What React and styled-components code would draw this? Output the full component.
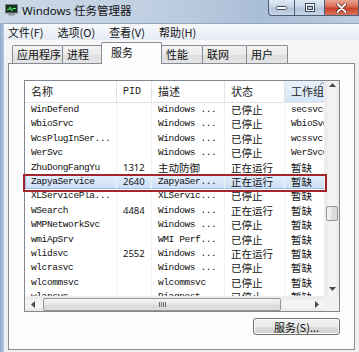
import React from "react";
import styled, { createGlobalStyle } from "styled-components";

const cjkFont = `"Noto Sans CJK SC", "Noto Sans", sans-serif`;
const monoFont = `"Liberation Mono", "Noto Sans CJK SC", monospace`;
const uiFont = `"Noto Sans", "Noto Sans CJK SC", sans-serif`;

const GlobalStyle = createGlobalStyle`
  *, *::before, *::after { box-sizing: border-box; }
  html, body { margin: 0; padding: 0; overflow: hidden; background: #b9cadd; }
  body { font-family: ${cjkFont}; color: #000; }
`;

const Window = styled.div`
  width: 359px;
  height: 352px;
  display: flex;
  flex-direction: column;
  position: relative;
  background: linear-gradient(90deg, #8ea9cc 0, #b4c7de 4px, #c3d2e2 100%);
`;

const TitleBar = styled.div`
  height: 23px;
  flex: none;
  display: flex;
  align-items: flex-start;
  background: linear-gradient(
    90deg,
    #cad8e6 0%,
    #c3d2e3 35%,
    #b4c6dc 60%,
    #a9bdd6 72%,
    #bccbdd 100%
  );
`;

const AppIcon = styled.svg`
  flex: none;
  margin: 4px 0 0 5px;
`;

const TitleText = styled.div`
  margin: 3px 0 0 4px;
  font: 11.5px/16px ${uiFont};
  color: #151515;
`;

const Controls = styled.div`
  margin-left: auto;
  display: flex;
  height: 16px;
`;

const CaptionButton = styled.div`
  width: ${(p) => p.$w}px;
  height: 16px;
  display: flex;
  align-items: center;
  justify-content: center;
  border: 1px solid #4c5f7a;
  border-top: none;
  background: ${(p) =>
    p.$close
      ? "linear-gradient(#eaa597, #d96b52 45%, #c6412a 55%, #d9755c)"
      : "linear-gradient(#dfe8f3, #c8d6e7 45%, #b3c4da 55%, #c8d6e6)"};
  &:first-child {
    border-bottom-left-radius: 4px;
  }
  & + & {
    border-left: none;
  }
`;

const Client = styled.div`
  flex: 1;
  margin-left: 4px;
  display: flex;
  flex-direction: column;
  background: #f0f0f0;
  min-height: 0;
`;

const MenuBar = styled.div`
  height: 17px;
  flex: none;
  display: flex;
  align-items: center;
  padding-left: 4px;
  border-top: 1px solid #93a6bf;
  background: linear-gradient(#f7f9fc, #e5ecf5);
`;

const MenuItem = styled.div`
  padding-right: 14px;
  font: 11px/16px ${cjkFont};
  color: #111;
`;

const TabArea = styled.div`
  flex: 1;
  display: flex;
  flex-direction: column;
  padding: 2px 4px 2px 4px;
  min-height: 0;
  background: linear-gradient(#f6f7f8, #f0f0f0 30px);
`;

const TabStrip = styled.div`
  height: 21px;
  flex: none;
  display: flex;
  align-items: flex-end;
  padding-left: 4px;
  position: relative;
  z-index: 1;
`;

const Tab = styled.div`
  width: ${(p) => p.$w}px;
  height: ${(p) => (p.$active ? 22 : 18)}px;
  margin-bottom: ${(p) => (p.$active ? -1 : 0)}px;
  padding-left: ${(p) => (p.$active ? 9 : 4)}px;
  border: 1px solid #898c95;
  border-bottom: none;
  border-radius: 2px 2px 0 0;
  background: ${(p) =>
    p.$active
      ? "#fcfcfc"
      : "linear-gradient(#f3f3f3, #ebebeb 50%, #dedede 51%, #e4e4e4)"};
  font: 11px/${(p) => (p.$active ? 19 : 17)}px ${cjkFont};
  color: #111;
  white-space: nowrap;
  & + & {
    margin-left: -1px;
  }
`;

const Panel = styled.div`
  flex: 1;
  display: flex;
  flex-direction: column;
  border: 1px solid #898c95;
  background: #fcfcfc;
  padding: 16px 14px 14px 15px;
  min-height: 0;
`;

const List = styled.div`
  height: 232px;
  flex: none;
  position: relative;
  display: grid;
  grid-template-columns: 1fr 15px;
  grid-template-rows: 1fr 15px;
  border: 1px solid #828790;
  background: #fff;
`;

const Viewport = styled.div`
  overflow: hidden;
  position: relative;
`;

const HeaderRow = styled.div`
  display: flex;
  height: 22px;
  border-bottom: 1px solid #e3e3e3;
  width: max-content;
`;

const HeaderCell = styled.div`
  width: ${(p) => p.$w}px;
  flex: none;
  position: relative;
  padding-left: 6px;
  border-right: 1px solid #e3e3e3;
  background: ${(p) =>
    p.$sorted ? "linear-gradient(#e6f1fb, #d6e6f6)" : "#fff"};
  font: ${(p) => (p.$mono ? `10px/21px ${monoFont}` : `11px/21px ${cjkFont}`)};
  color: #222;
  white-space: nowrap;
`;

const SortMark = styled.svg`
  position: absolute;
  top: 1px;
  left: 34px;
`;

const Row = styled.div`
  display: flex;
  height: 14.4px;
  width: max-content;
  background: ${(p) =>
    p.$selected ? "linear-gradient(#e4eefb, #cadff7)" : "transparent"};
  box-shadow: ${(p) => (p.$selected ? "inset 0 0 0 1px #9dbde3" : "none")};
`;

const Cell = styled.div`
  width: ${(p) => p.$w}px;
  flex: none;
  padding-left: 6px;
  border-right: 1px solid #f2f2f2;
  overflow: hidden;
  white-space: nowrap;
  color: #111;
  font: ${(p) =>
    p.$cjk
      ? `10.5px/14.4px ${cjkFont}`
      : p.$digits
      ? `9.5px/14.4px ${uiFont}`
      : `9.5px/14.4px ${monoFont}`};
  letter-spacing: ${(p) => (p.$cjk || p.$digits ? "0" : "-0.4px")};
`;

const VScroll = styled.div`
  display: flex;
  flex-direction: column;
  background: linear-gradient(90deg, #e8e8e8, #f4f4f4 30%, #f4f4f4 70%, #e8e8e8);
  border-left: 1px solid #efefef;
`;

const HScroll = styled.div`
  display: flex;
  background: linear-gradient(#e8e8e8, #f4f4f4 30%, #f4f4f4 70%, #e8e8e8);
  border-top: 1px solid #efefef;
`;

const Corner = styled.div`
  background: #f0f0f0;
`;

const ArrowButton = styled.div`
  width: 15px;
  height: 15px;
  flex: none;
  display: flex;
  justify-content: center;
  align-items: ${(p) => (p.$top ? "flex-start" : "center")};
  padding-top: ${(p) => (p.$top ? 2 : 0)}px;
`;

const Track = styled.div`
  flex: 1;
  display: flex;
  flex-direction: ${(p) => (p.$vertical ? "column" : "row")};
  align-items: center;
`;

const Thumb = styled.div`
  flex: none;
  display: flex;
  align-items: center;
  justify-content: center;
  gap: 1px;
  border: 1px solid #979797;
  border-radius: 2px;
  background: ${(p) =>
    p.$vertical
      ? "linear-gradient(90deg, #f5f5f5, #e6e6e6 50%, #d9d9d9 51%, #dedede)"
      : "linear-gradient(#f5f5f5, #e6e6e6 50%, #d9d9d9 51%, #dedede)"};
`;

const Grip = styled.span`
  width: 1px;
  height: 5px;
  background: #6c6c6c;
`;

const Annotation = styled.div`
  position: absolute;
  left: -2px;
  top: 93px;
  width: 304px;
  height: 18px;
  border: 2px solid #a3262d;
  pointer-events: none;
`;

const ActionButton = styled.button`
  align-self: flex-end;
  width: 87px;
  height: 17px;
  margin-top: 6px;
  padding: 0;
  border: 1px solid #707070;
  border-radius: 3px;
  background: linear-gradient(#f2f2f2, #ebebeb 50%, #dddddd 51%, #cfcfcf);
  box-shadow: inset 0 0 0 1px #fbfbfb;
  font: 11px/14px ${cjkFont};
  color: #111;
`;

const columns = [
  { title: "名称", width: 92 },
  { title: "PID", width: 35, mono: true },
  { title: "描述", width: 73 },
  { title: "状态", width: 60 },
  { title: "工作组", width: 75, sorted: true },
];

const services = [
  ["WinDefend", "", "Windows ...", "已停止", "secsvcs"],
  ["WbioSrvc", "", "Windows ...", "已停止", "WbioSvcGroup"],
  ["WcsPlugInSer...", "", "Windows ...", "已停止", "wcssvc"],
  ["WerSvc", "", "Windows ...", "已停止", "WerSvcGroup"],
  ["ZhuDongFangYu", "1312", "主动防御", "正在运行", "暂缺"],
  ["ZapyaService", "2640", "ZapyaSer...", "正在运行", "暂缺"],
  ["XLServicePla...", "", "XLServic...", "已停止", "暂缺"],
  ["WSearch", "4484", "Windows ...", "正在运行", "暂缺"],
  ["WMPNetworkSvc", "", "Windows ...", "已停止", "暂缺"],
  ["wmiApSrv", "", "WMI Perf...", "已停止", "暂缺"],
  ["wlidsvc", "2552", "Windows ...", "正在运行", "暂缺"],
  ["wlcrasvc", "", "Windows ...", "已停止", "暂缺"],
  ["wlcommsvc", "", "wlcommsvc", "已停止", "暂缺"],
  ["wlansvc", "", "Diagnost...", "已停止", "暂缺"],
];

const tabs = [
  { label: "应用程序", width: 51 },
  { label: "进程", width: 40 },
  { label: "服务", width: 61, active: true },
  { label: "性能", width: 42 },
  { label: "联网", width: 45 },
  { label: "用户", width: 42 },
];

const isCjk = (s) => /[\u4e00-\u9fff]/.test(s);

const Arrow = ({ dir }) => {
  const pts = {
    up: "0,4 3.5,0 7,4",
    down: "0,0 3.5,4 7,0",
    left: "4,0 0,3.5 4,7",
    right: "0,0 4,3.5 0,7",
  }[dir];
  const vertical = dir === "up" || dir === "down";
  return (
    <svg width={vertical ? 7 : 4} height={vertical ? 4 : 7}>
      <polygon points={pts} fill="#4a4a4a" />
    </svg>
  );
};

export default function App() {
  return (
    <>
      <GlobalStyle />
      <Window>
        <TitleBar>
          <AppIcon width="13" height="12" viewBox="0 0 13 12">
            <rect x="0.5" y="0.5" width="12" height="8.5" fill="#1d2a24" stroke="#7b7f86" />
            <rect x="2" y="2" width="9" height="5.5" fill="#0f3b1c" />
            <polyline points="2,5.5 4,5.5 5,3 6.5,7 7.5,4.5 11,4.5" fill="none" stroke="#5ee86a" strokeWidth="1" />
            <rect x="3.5" y="9.5" width="6" height="2" fill="#8c9096" />
          </AppIcon>
          <TitleText>Windows 任务管理器</TitleText>
          <Controls>
            <CaptionButton $w={27}>
              <svg width="11" height="4">
                <rect x="0.5" y="0.5" width="10" height="3" rx="1" fill="#fff" stroke="#3d4a5c" strokeWidth="1" />
              </svg>
            </CaptionButton>
            <CaptionButton $w={30}>
              <svg width="10" height="9">
                <rect x="0.5" y="0.5" width="9" height="8" fill="none" stroke="#3d4a5c" strokeWidth="1" />
                <rect x="1.5" y="1.5" width="7" height="6" fill="none" stroke="#fff" strokeWidth="1" />
                <rect x="2.5" y="3.5" width="5" height="3" fill="#b8c7da" stroke="#3d4a5c" strokeWidth="1" />
              </svg>
            </CaptionButton>
            <CaptionButton $w={34} $close>
              <svg width="11" height="10" viewBox="0 0 11 10">
                <path d="M1.5 1 L9.5 9 M9.5 1 L1.5 9" stroke="#5a1d14" strokeWidth="3.2" strokeLinecap="round" />
                <path d="M1.5 1 L9.5 9 M9.5 1 L1.5 9" stroke="#fff" strokeWidth="1.8" strokeLinecap="round" />
              </svg>
            </CaptionButton>
          </Controls>
        </TitleBar>
        <Client>
          <MenuBar>
            <MenuItem>文件(F)</MenuItem>
            <MenuItem>选项(O)</MenuItem>
            <MenuItem>查看(V)</MenuItem>
            <MenuItem>帮助(H)</MenuItem>
          </MenuBar>
          <TabArea>
            <TabStrip>
              {tabs.map((t) => (
                <Tab key={t.label} $w={t.width} $active={t.active}>
                  {t.label}
                </Tab>
              ))}
            </TabStrip>
            <Panel>
              <List>
                <Viewport>
                  <HeaderRow>
                    {columns.map((c) => (
                      <HeaderCell key={c.title} $w={c.width} $mono={c.mono} $sorted={c.sorted}>
                        {c.sorted && (
                          <SortMark width="7" height="4">
                            <polyline points="0.5,3.5 3.5,0.5 6.5,3.5" fill="none" stroke="#7a8796" strokeWidth="1" />
                          </SortMark>
                        )}
                        {c.title}
                      </HeaderCell>
                    ))}
                  </HeaderRow>
                  {services.map((row, i) => (
                    <Row key={row[0]} $selected={i === 5}>
                      {row.map((v, j) => (
                        <Cell
                          key={j}
                          $w={columns[j].width}
                          $cjk={isCjk(v)}
                          $digits={j === 1}
                        >
                          {v}
                        </Cell>
                      ))}
                    </Row>
                  ))}
                </Viewport>
                <VScroll>
                  <ArrowButton $top>
                    <Arrow dir="up" />
                  </ArrowButton>
                  <Track $vertical>
                    <Thumb $vertical style={{ marginTop: 110, width: 12, height: 15 }} />
                  </Track>
                  <ArrowButton>
                    <Arrow dir="down" />
                  </ArrowButton>
                </VScroll>
                <HScroll>
                  <ArrowButton>
                    <Arrow dir="left" />
                  </ArrowButton>
                  <Track>
                    <Thumb style={{ marginLeft: 3, width: 238, height: 13 }}>
                      <Grip />
                      <Grip />
                      <Grip />
                      <Grip />
                    </Thumb>
                  </Track>
                  <ArrowButton>
                    <Arrow dir="right" />
                  </ArrowButton>
                </HScroll>
                <Corner />
                <Annotation />
              </List>
              <ActionButton>服务(S)...</ActionButton>
            </Panel>
          </TabArea>
        </Client>
      </Window>
    </>
  );
}
